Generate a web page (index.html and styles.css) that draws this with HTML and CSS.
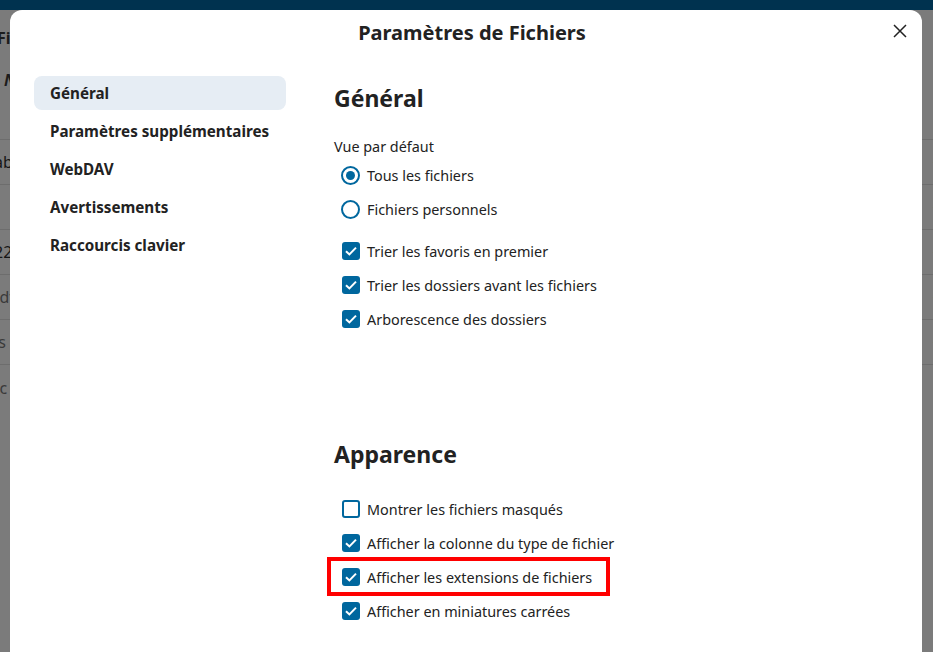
FILE: index.html
```html
<!DOCTYPE html>
<html lang="fr">
<head>
<meta charset="utf-8">
<title>Paramètres de Fichiers</title>
<link rel="stylesheet" href="styles.css">
</head>
<body>
<div class="topbar"></div>
<div class="page">
  <div class="page-head">
    <div class="ph-title">Fichiers</div>
    <div class="ph-sub">Nom</div>
  </div>
  <div class="rows">
    <div class="row"><span class="cell dark">ab</span><span class="dots">•</span></div>
    <div class="row"><span class="cell"></span><span class="dots">•</span></div>
    <div class="row"><span class="cell dark">228</span><span class="dots">•</span></div>
    <div class="row"><span class="cell">Idt</span><span class="dots">•</span></div>
    <div class="row"><span class="cell">ls</span><span class="dots">•</span></div>
    <div class="row last"><span class="cell">Ic</span></div>
  </div>
</div>

<div class="modal">
  <div class="modal-head">
    <h1 class="modal-title">Paramètres de Fichiers</h1>
    <button class="close" aria-label="Fermer">
      <svg width="14" height="14" viewBox="0 0 14 14"><path d="M1 1L13 13M13 1L1 13" stroke="#222" stroke-width="1.5" fill="none"/></svg>
    </button>
  </div>
  <div class="modal-body">
    <nav class="side">
      <a class="side-item active">Général</a>
      <a class="side-item">Paramètres supplémentaires</a>
      <a class="side-item">WebDAV</a>
      <a class="side-item">Avertissements</a>
      <a class="side-item">Raccourcis clavier</a>
    </nav>
    <main class="content">
      <section class="sec">
        <h2 class="sec-title">Général</h2>
        <div class="field-label">Vue par défaut</div>
        <div class="opt"><span class="radio on"></span><span>Tous les fichiers</span></div>
        <div class="opt"><span class="radio"></span><span>Fichiers personnels</span></div>
        <div class="checks">
          <div class="opt"><span class="cb on"><svg viewBox="0 0 18 18"><path d="M4 9.2L7.4 12.4L14 5.6" stroke="#fff" stroke-width="2" fill="none"/></svg></span><span>Trier les favoris en premier</span></div>
          <div class="opt"><span class="cb on"><svg viewBox="0 0 18 18"><path d="M4 9.2L7.4 12.4L14 5.6" stroke="#fff" stroke-width="2" fill="none"/></svg></span><span>Trier les dossiers avant les fichiers</span></div>
          <div class="opt"><span class="cb on"><svg viewBox="0 0 18 18"><path d="M4 9.2L7.4 12.4L14 5.6" stroke="#fff" stroke-width="2" fill="none"/></svg></span><span>Arborescence des dossiers</span></div>
        </div>
      </section>
      <section class="sec sec2">
        <h2 class="sec-title">Apparence</h2>
        <div class="checks2">
          <div class="opt"><span class="cb"></span><span>Montrer les fichiers masqués</span></div>
          <div class="opt"><span class="cb on"><svg viewBox="0 0 18 18"><path d="M4 9.2L7.4 12.4L14 5.6" stroke="#fff" stroke-width="2" fill="none"/></svg></span><span>Afficher la colonne du type de fichier</span></div>
          <div class="opt hl"><span class="cb on"><svg viewBox="0 0 18 18"><path d="M4 9.2L7.4 12.4L14 5.6" stroke="#fff" stroke-width="2" fill="none"/></svg></span><span>Afficher les extensions de fichiers</span></div>
          <div class="opt"><span class="cb on"><svg viewBox="0 0 18 18"><path d="M4 9.2L7.4 12.4L14 5.6" stroke="#fff" stroke-width="2" fill="none"/></svg></span><span>Afficher en miniatures carrées</span></div>
        </div>
      </section>
    </main>
  </div>
</div>
</body>
</html>
```

FILE: styles.css
```css
* { box-sizing: border-box; }
html, body { margin: 0; padding: 0; }
body {
  background: #7b7b7b;
  font-family: "Noto Sans", "Open Sans", sans-serif;
  color: #222;
  height: 652px;
  overflow: hidden;
  position: relative;
}
.topbar { height: 10px; background: #00324f; }
.page { color: #1c1c1c; }
.page-head { height: 129px; position: relative; }
.ph-title { font-weight: 700; font-size: 16px; margin-left: -3px; padding-top: 17px; }
.ph-sub { font-weight: 700; font-style: italic; font-size: 16px; margin-left: 4px; padding-top: 20px; }
.rows { border-top: 1px solid #6d6d6d; }
.row {
  height: 45px;
  border-bottom: 1px solid #6d6d6d;
  display: flex;
  align-items: center;
  justify-content: space-between;
  font-size: 16px;
}
.row.last { border-bottom: none; }
.cell { margin-left: -6px; color: #3a3a3a; }
.cell.dark { color: #161616; }
.dots { margin-right: -4px; font-size: 12px; color: #111; }

.modal {
  position: absolute;
  left: 10px;
  top: 10px;
  width: 912px;
  height: 700px;
  background: #fff;
  border-radius: 12px 12px 0 0;
}
.modal-head {
  height: 44px;
  display: flex;
  align-items: center;
  justify-content: center;
  padding-left: 12px;
  position: relative;
}
.modal-title {
  margin: 0;
  font-size: 20px;
  font-weight: 700;
  color: #222;
}
.close {
  position: absolute;
  right: 14px;
  top: 13px;
  width: 16px;
  height: 16px;
  padding: 0;
  border: none;
  background: none;
  display: flex;
  align-items: center;
  justify-content: center;
}
.modal-body {
  display: flex;
  padding: 22px 0 0 24px;
}
.side {
  width: 252px;
  display: flex;
  flex-direction: column;
  gap: 4px;
}
.side-item {
  height: 34px;
  display: flex;
  align-items: center;
  padding-left: 16px;
  border-radius: 8px;
  font-weight: 700;
  font-size: 15.2px;
  color: #222;
}
.side-item.active { background: #e6edf4; }
.content {
  margin-left: 48px;
  flex: 1;
  padding-top: 7px;
}
.sec-title {
  margin: 0;
  font-size: 23px;
  line-height: 30px;
  font-weight: 700;
  color: #222;
}
.field-label {
  margin-top: 24px;
  font-size: 14.4px;
  line-height: 20px;
}
.opt {
  height: 34px;
  display: flex;
  align-items: center;
  gap: 7px;
  padding-left: 7px;
  font-size: 14.4px;
  width: max-content;
  position: relative;
}
.field-label + .opt { margin-top: 1px; }
.checks { margin-top: 8px; }
.sec2 { margin-top: 103px; }
.checks2 { margin-top: 23px; }
.radio {
  width: 19px;
  height: 19px;
  border: 2px solid #00679e;
  border-radius: 50%;
  display: flex;
  align-items: center;
  justify-content: center;
}
.radio.on::after {
  content: "";
  width: 9px;
  height: 9px;
  border-radius: 50%;
  background: #00679e;
}
.cb {
  width: 18px;
  height: 18px;
  margin-left: 1px;
  border: 2px solid #00679e;
  border-radius: 3px;
  background: #fff;
  display: flex;
}
.cb.on { background: #00679e; border: none; }
.cb svg { width: 18px; height: 18px; }
.hl { padding-right: 18px; }
.hl::after {
  content: "";
  position: absolute;
  left: -7px;
  right: 0;
  top: -3px;
  bottom: -2px;
  border: 4px solid #f00;
}
```
